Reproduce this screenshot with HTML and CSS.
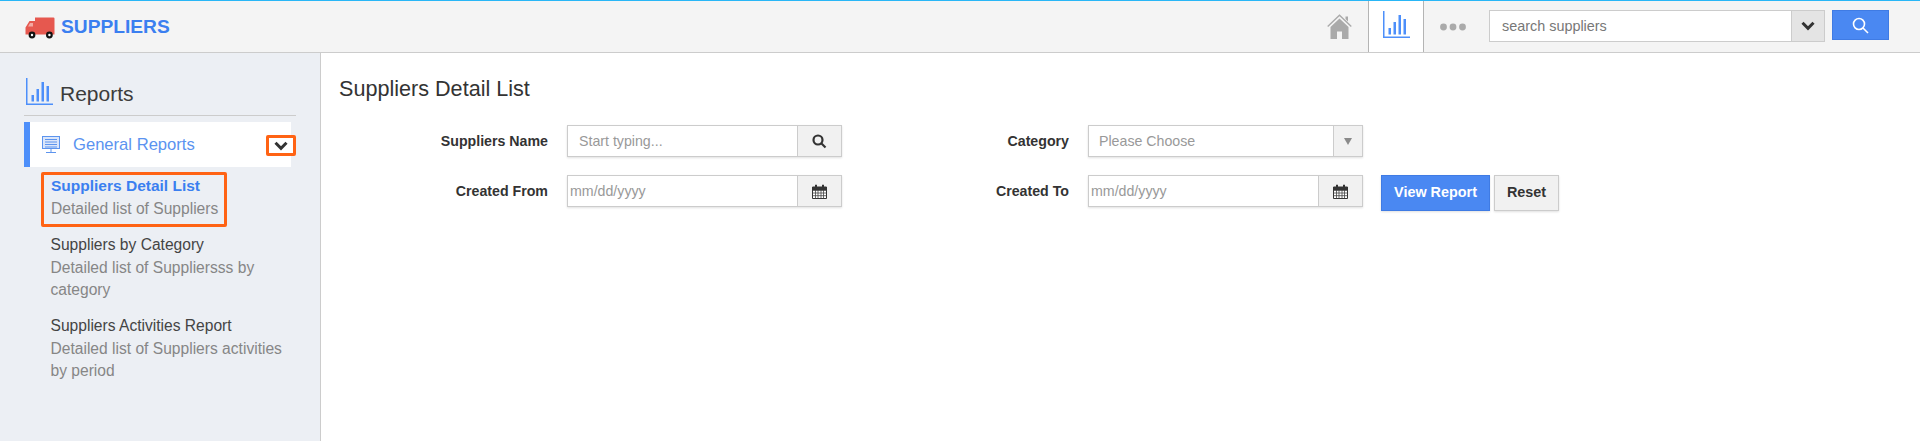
FILE: index.html
```html
<!DOCTYPE html>
<html lang="en">
<head>
<meta charset="utf-8">
<title>Suppliers Detail List</title>
<link rel="stylesheet" href="styles.css">
</head>
<body>
<header class="topbar">
  <div class="brand">
    <svg class="truck" viewBox="0 0 30 23" width="30" height="23">
      <path class="truck-fill" d="M10 0.5H28.4Q29.5 0.5 29.5 1.6V17.5H0.5V10.5L4.5 4H10Z"/>
      <path class="truck-window" d="M5 6H8V9.5H3Z"/>
      <circle class="wheel" cx="7" cy="18" r="3.4"/><circle class="hub" cx="7" cy="18" r="1.2"/>
      <circle class="wheel" cx="24.4" cy="18" r="3.4"/><circle class="hub" cx="24.4" cy="18" r="1.2"/>
    </svg>
    <span class="brand-name">SUPPLIERS</span>
  </div>
  <nav class="topnav">
    <a class="nav-home" aria-label="Home">
      <svg viewBox="0 0 25 25" width="25" height="25">
        <path class="home-roof" d="M0.7 12.6L12.5 1.2L24.3 12.6"/>
        <path class="home-fill" d="M18.5 2.5H21V7.5L18.5 5ZM12.5 4.5L21.5 13V25H15V17.5H10V25H3.5V13Z"/>
      </svg>
    </a>
    <a class="nav-reports" aria-label="Reports">
      <svg class="chart" viewBox="0 0 27 27" width="27" height="27">
        <path class="chart-axis" d="M0.75 0V26.25H27"/>
        <path class="chart-bar" d="M5.5 17H8V23.5H5.5ZM10.5 11H13V23.5H10.5ZM15.5 4H18V23.5H15.5ZM20.5 8H23V23.5H20.5Z"/>
      </svg>
    </a>
    <a class="nav-more" aria-label="More">
      <svg viewBox="0 0 26 8" width="26" height="8">
        <circle cx="3.5" cy="4" r="3.4"/><circle cx="13" cy="4" r="3.4"/><circle cx="22.5" cy="4" r="3.4"/>
      </svg>
    </a>
  </nav>
  <div class="topsearch">
    <div class="topsearch-field">
      <input class="topsearch-input" type="text" value="search suppliers" aria-label="Search suppliers">
      <span class="topsearch-toggle">
        <svg class="chev" viewBox="0 0 14 10" width="14" height="10"><path d="M1.5 1.8L7 7.3L12.5 1.8"/></svg>
      </span>
    </div>
    <button class="topsearch-btn" type="button" aria-label="Search">
      <svg viewBox="0 0 17 17" width="17" height="17"><circle cx="7" cy="7" r="5.5"/><path d="M11 11L16 16"/></svg>
    </button>
  </div>
</header>

<div class="page">
  <aside class="sidebar">
    <div class="side-head">
      <svg class="chart" viewBox="0 0 27 27" width="27" height="27">
        <path class="chart-axis" d="M0.75 0V26.25H27"/>
        <path class="chart-bar" d="M5.5 17H8V23.5H5.5ZM10.5 11H13V23.5H10.5ZM15.5 4H18V23.5H15.5ZM20.5 8H23V23.5H20.5Z"/>
      </svg>
      <span class="side-title">Reports</span>
    </div>
    <div class="side-group">
      <svg class="monitor" viewBox="0 0 18 18" width="18" height="18">
        <rect class="monitor-screen" x="0.5" y="0.5" width="17" height="12"/>
        <path class="monitor-line" d="M3 3.5H15M3 6H15M3 8.5H15M3 11H15M9 13V16M4 16.5H14"/>
      </svg>
      <span class="side-group-label">General Reports</span>
      <span class="side-toggle">
        <svg class="chev" viewBox="0 0 14 10" width="14" height="10"><path d="M1.5 1.8L7 7.3L12.5 1.8"/></svg>
      </span>
    </div>
    <ul class="side-list">
      <li class="side-item is-active">
        <a class="item-title">Suppliers Detail List</a>
        <p class="item-desc">Detailed list of Suppliers</p>
      </li>
      <li class="side-item">
        <a class="item-title">Suppliers by Category</a>
        <p class="item-desc">Detailed list of Suppliersss by category</p>
      </li>
      <li class="side-item">
        <a class="item-title">Suppliers Activities Report</a>
        <p class="item-desc">Detailed list of Suppliers activities by period</p>
      </li>
    </ul>
  </aside>

  <main class="content">
    <h1 class="content-title">Suppliers Detail List</h1>
    <form class="report-form">
      <label class="field-label">Suppliers Name</label>
      <div class="field">
        <input class="field-input" type="text" placeholder="Start typing...">
        <span class="field-addon addon-wide">
          <svg class="glyph-search" viewBox="0 0 15 15" width="15" height="15"><circle cx="6" cy="6" r="4.5"/><path d="M9.5 9.5L13.5 13.5"/></svg>
        </span>
      </div>
      <label class="field-label">Category</label>
      <div class="field">
        <span class="field-select">Please Choose</span>
        <span class="field-addon addon-narrow"><span class="caret"></span></span>
      </div>
      <span class="form-spacer"></span>

      <label class="field-label">Created From</label>
      <div class="field">
        <input class="field-input is-date" type="text" placeholder="mm/dd/yyyy">
        <span class="field-addon addon-wide">
          <svg class="glyph-cal" viewBox="0 0 15 15" width="15" height="15">
            <path class="cal-body" d="M0.5 3H14.5V14.5H0.5Z"/>
            <path class="cal-grid" d="M0.5 6.5H14.5M0.5 9H14.5M0.5 11.7H14.5M3.5 5V14.5M6 5V14.5M9 5V14.5M11.5 5V14.5"/>
            <path class="cal-head" d="M0.5 3H3V0.8H5V3H10V0.8H12V3H14.5V6H0.5Z"/>
          </svg>
        </span>
      </div>
      <label class="field-label">Created To</label>
      <div class="field">
        <input class="field-input is-date" type="text" placeholder="mm/dd/yyyy">
        <span class="field-addon addon-wide">
          <svg class="glyph-cal" viewBox="0 0 15 15" width="15" height="15">
            <path class="cal-body" d="M0.5 3H14.5V14.5H0.5Z"/>
            <path class="cal-grid" d="M0.5 6.5H14.5M0.5 9H14.5M0.5 11.7H14.5M3.5 5V14.5M6 5V14.5M9 5V14.5M11.5 5V14.5"/>
            <path class="cal-head" d="M0.5 3H3V0.8H5V3H10V0.8H12V3H14.5V6H0.5Z"/>
          </svg>
        </span>
      </div>
      <div class="form-actions">
        <button class="btn btn-primary" type="button">View Report</button>
        <button class="btn btn-plain" type="button">Reset</button>
      </div>
    </form>
  </main>
</div>
</body>
</html>
```
FILE: styles.css
```css
* { box-sizing: border-box; }
html, body { height: 100%; }
body {
  margin: 0;
  display: flex;
  flex-direction: column;
  font-family: "Liberation Sans", Arial, sans-serif;
  color: #333;
  background: #fff;
  overflow: hidden;
}
p, ul, h1 { margin: 0; padding: 0; }
ul { list-style: none; }

/* top bar */
.topbar {
  flex: none;
  height: 53px;
  display: flex;
  border-top: 1px solid #29b6f6;
  border-bottom: 1px solid #ccc;
  background: #f4f4f4;
}
.brand { display: flex; align-items: center; padding-left: 25px; }
.truck { display: block; margin-top: 3px; }
.truck-fill { fill: #e6584f; }
.truck-window { fill: #f3a8a2; }
.wheel { fill: #111; }
.hub { fill: #fff; }
.brand-name {
  margin-left: 6px;
  font-size: 19.2px;
  font-weight: 700;
  color: #3b7ff0;
}
.topnav { margin-left: auto; display: flex; align-items: stretch; }
.nav-home { display: flex; align-items: center; padding: 0 16px 0 0; }
.home-roof { fill: none; stroke: #aaa; stroke-width: 1.4; }
.home-fill { fill: #aaa; }
.nav-reports {
  width: 56px;
  display: flex;
  justify-content: center;
  padding-top: 10px;
  background: #fff;
  border-left: 1px solid #b4b4b4;
  border-right: 1px solid #b4b4b4;
}
.chart { display: block; flex: none; }
.chart-axis { fill: none; stroke: #4d8ffa; stroke-width: 1.5; }
.chart-bar { fill: #4d8ffa; }
.nav-more { display: flex; align-items: center; padding: 0 23px 0 16px; }
.nav-more svg { display: block; fill: #aaa; }
.topsearch { display: flex; align-items: flex-start; gap: 7px; padding: 9px 31px 0 0; }
.topsearch-field {
  width: 336px;
  height: 32px;
  display: flex;
  border: 1px solid #ccc;
  background: #fff;
}
.topsearch-input {
  flex: 1;
  min-width: 0;
  border: 0;
  outline: 0;
  padding: 0 12px;
  font: 14.4px "Liberation Sans", Arial, sans-serif;
  color: #777;
  background: transparent;
}
.topsearch-toggle {
  width: 33px;
  display: flex;
  align-items: center;
  justify-content: center;
  background: #e4e4e4;
  border-left: 1px solid #ccc;
}
.chev { display: block; fill: none; stroke: #333; stroke-width: 3; }
.topsearch-btn {
  width: 57px;
  height: 30px;
  padding: 0;
  display: flex;
  align-items: center;
  justify-content: center;
  background: #4a88f2;
  border: 1px solid #3f7be4;
}
.topsearch-btn svg { fill: none; stroke: #fff; stroke-width: 1.6; display: block; }

/* page */
.page { flex: 1; min-height: 0; display: flex; }
.sidebar {
  flex: none;
  width: 321px;
  background: #eceff4;
  border-right: 1px solid #ccc;
  padding: 25px 24px 0;
}
.side-head {
  height: 38px;
  display: flex;
  align-items: flex-start;
  padding-left: 2px;
  border-bottom: 1px solid #ccc;
}
.side-title { margin: 2px 0 0 7px; font-size: 21px; line-height: 28px; color: #3c3c3c; }
.side-group {
  width: 267px;
  height: 45px;
  margin-top: 6px;
  display: flex;
  align-items: center;
  background: #fff;
  border-left: 6px solid #4d8ffa;
  padding-left: 12px;
}
.monitor { display: block; flex: none; }
.monitor-screen { fill: #dbe6fa; stroke: #5c94ee; }
.monitor-line { fill: none; stroke: #5c94ee; }
.side-group-label { margin-left: 13px; font-size: 16.6px; color: #5b93f0; }
.side-toggle {
  margin-left: auto;
  margin-right: -5px;
  margin-top: 2px;
  width: 30px;
  height: 21px;
  display: flex;
  align-items: center;
  justify-content: center;
  background: #fff;
  border: 3px solid #ff6314;
  border-radius: 2px;
}
.side-list { margin-top: 5px; padding-left: 17px; }
.side-item { width: 250px; padding-left: 9.5px; margin-bottom: 13.5px; font-size: 15.6px; line-height: 22.5px; }
.side-item.is-active {
  width: 186px;
  padding: 0 0 4px 7px;
  margin-bottom: 7px;
  border: 3px solid #ff6314;
  border-radius: 2px;
}
.item-title { display: block; color: #444; }
.is-active .item-title { font-weight: 700; font-size: 15.5px; color: #3b7ff0; }
.item-desc { color: #868686; }

/* content */
.content { flex: 1; min-width: 0; padding: 21px 0 0 18px; }
.content-title { font-size: 21.6px; font-weight: 400; line-height: 30px; color: #333; }
.report-form {
  margin-top: 21px;
  display: grid;
  grid-template-columns: 228px 275px 246px 275px auto;
  grid-auto-rows: 32px;
  row-gap: 18px;
}
.field-label {
  padding-right: 19px;
  text-align: right;
  font-size: 14.2px;
  font-weight: 700;
  line-height: 32px;
  color: #333;
}
.field {
  display: flex;
  border: 1px solid #ccc;
  background: #fff;
  box-shadow: 0 1px 2px rgba(0, 0, 0, .12);
}
.field-input {
  flex: 1;
  min-width: 0;
  border: 0;
  outline: 0;
  padding: 0 11px;
  font: 14.2px "Liberation Sans", Arial, sans-serif;
  color: #555;
  background: transparent;
}
.field-input::placeholder { color: #999; opacity: 1; }
.field-input.is-date { padding: 0 2px; }
.field-select {
  flex: 1;
  padding-left: 10px;
  font-size: 14.2px;
  line-height: 30px;
  color: #999;
}
.field-addon {
  display: flex;
  align-items: center;
  justify-content: center;
  background: #f1f1f1;
  border-left: 1px solid #ccc;
}
.addon-wide { width: 44px; }
.addon-narrow { width: 29px; }
.caret {
  width: 0;
  height: 0;
  border-left: 4.5px solid transparent;
  border-right: 4.5px solid transparent;
  border-top: 7px solid #8a8a8a;
}
.glyph-search { display: block; fill: none; stroke: #333; stroke-width: 2.2; }
.glyph-cal { display: block; }
.cal-body { fill: #fff; stroke: #333; }
.cal-grid { fill: none; stroke: #444; stroke-width: .8; }
.cal-head { fill: #333; }
.form-spacer { display: block; }
.form-actions { display: flex; align-items: flex-start; gap: 4px; padding-left: 18px; }
.btn {
  height: 36px;
  padding: 0 0 2px;
  font: 700 14.4px "Liberation Sans", Arial, sans-serif;
  box-shadow: 0 1px 2px rgba(0, 0, 0, .12);
}
.btn-primary { width: 109px; color: #fff; background: #4a88f2; border: 1px solid #3f7be4; }
.btn-plain { width: 65px; color: #333; background: #f1f1f1; border: 1px solid #ccc; }
```
